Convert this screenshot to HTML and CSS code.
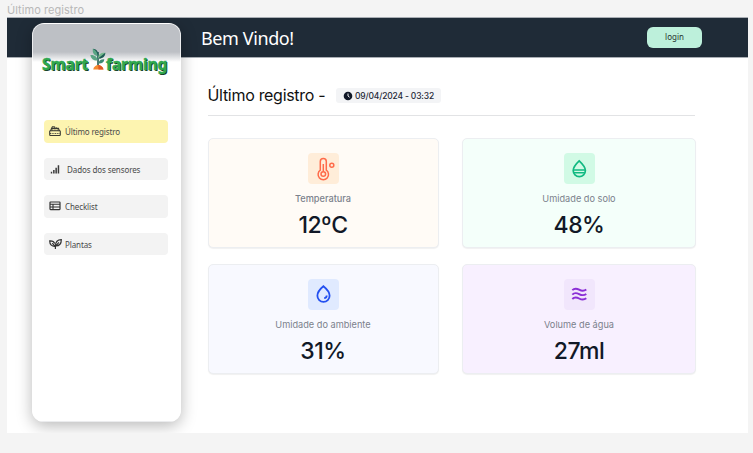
FILE: index.html
```html
<!DOCTYPE html>
<html lang="pt-BR">
<head>
<meta charset="utf-8">
<title>Smart farming</title>
<link rel="stylesheet" href="styles.css">
</head>
<body>
<div class="frame-label">Último registro</div>
<div class="frame">
  <header class="topbar">
    <h1 class="welcome">Bem Vindo!</h1>
    <button class="login">login</button>
  </header>

  <aside class="sidebar">
    <div class="logo">
      <span class="logo-word smart">Smart</span>
      <svg class="sprout" viewBox="0 0 16 22">
        <path d="M8 18V4" stroke="#1f5a55" stroke-width="1.600" fill="none"/>
        <path d="M7.500 8C3 7.500 2.500 4 2.800.8 6 1.500 8 3.500 8.200 8z" fill="#5aa584"/>
        <path d="M7.600 8C7.500 4.500 5.500 2 2.800.8 6 1 8.500 3 8.500 8z" fill="#1f5a55"/>
        <path d="M7.600 12.500C4 13 1 11 .4 7 4.500 6.500 7.500 9 7.600 12.500z" fill="#5aa584"/>
        <path d="M8 10.500C8 6.500 11 4.500 15.300 4.800 15.200 8.500 12.500 11 8 10.500z" fill="#76b98c"/>
        <path d="M8 10.500L15.300 4.800C15.200 8.500 12.500 11 8 10.500z" fill="#1f5a55"/>
        <path d="M8.300 15.500C8.800 12.500 11 11 14.300 11.200 14 14.500 11.500 16 8.300 15.500z" fill="#3c8a72"/>
        <path d="M3.200 21.500C3.700 18.500 6 17 8.200 17s4.700 1.500 5.300 4.500z" fill="#f58a32"/>
        <path d="M8.200 17c2.200 0 4.700 1.500 5.300 4.500H8.500z" fill="#dd5a25"/>
      </svg>
      <span class="logo-word farming">farming</span>
    </div>
    <nav class="menu">
      <a class="item active">
        <svg class="menu-icon" viewBox="0 0 12 12" fill="none" stroke="#3a3a32">
          <path d="M1.600 6 2.600 3.300H9.400L10.400 6" stroke-width="1.200"/>
          <path d="M3 3V1.800H5.800V3M7.500 3.200V2.500" stroke-width="1"/>
          <rect x=".7" y="5.800" width="10.600" height="4.700" rx=".7" stroke-width="1.100"/>
          <path d="M3 5H9M1 8.500H11" stroke-width=".9" stroke-dasharray="1 .7"/>
        </svg>
        <span>Último registro</span>
      </a>
      <a class="item sensors">
        <svg class="menu-icon" viewBox="0 0 12 12" fill="#3a3a3a">
          <path d="M1.800 8.800h1.400V10.500H1.800zM4.100 7h1.500V10.500H4.100zM6.400 4.800h1.500V10.500H6.400zM8.700 2.300H10.200V10.500H8.700z"/>
        </svg>
        <span>Dados dos sensores</span>
      </a>
      <a class="item">
        <svg class="menu-icon" viewBox="0 0 12 12" fill="none" stroke="#333">
          <rect x="1" y="2" width="10" height="7.600" rx=".5" stroke-width="1.200"/>
          <path d="M1 4.300H11M1 7H11M4 4V9.600" stroke-width="1.100"/>
        </svg>
        <span>Checklist</span>
      </a>
      <a class="item">
        <svg class="menu-icon leaf" viewBox="0 0 13 12" fill="none" stroke="#333" stroke-width="1.200">
          <path d="M6.400 11V8.200C6.500 4.200 8.800 1.700 12.300 1.700 12.400 5.500 10.500 8 6.800 7.900L9.900 4.300"/>
          <path d="M6.300 8.400C3 8.700.7 6.500.7 2.900 3.500 2.700 5.100 3.800 5.700 5.500M6.300 8.400 3.200 5.200"/>
        </svg>
        <span>Plantas</span>
      </a>
    </nav>
  </aside>

  <main class="content">
    <div class="heading">
      <h2 class="title">Último registro -</h2>
      <span class="stamp">
        <svg class="clock" viewBox="0 0 10 10"><circle cx="5" cy="5" r="4.300" fill="#111827"/><path d="M5 2.500V5L6.600 6.300" stroke="#f3f4f6" fill="none"/></svg>
        <span>09/04/2024 - 03:32</span>
      </span>
    </div>
    <section class="cards">
      <article class="card temperature">
        <div class="tile">
          <svg viewBox="0 0 31 31" fill="none" stroke="#ff6b4a" stroke-width="1.500">
            <path d="M12.300 17.200V8.600a3 3 0 0 1 6 0V17.200a5.200 5.200 0 1 1-6 0z"/>
            <circle cx="15.300" cy="21" r="2.300"/><path d="M15.300 18.500V11"/><circle cx="23.800" cy="12.300" r="2"/>
          </svg>
        </div>
        <p class="label">Temperatura</p><p class="value">12ºC</p>
      </article>
      <article class="card soil">
        <div class="tile">
          <svg viewBox="0 0 31 31" fill="none" stroke="#10b981" stroke-width="1.700">
            <path d="M15.200 7.800C11.800 11 9.200 14.300 9.200 17.500a6.100 6.100 0 0 0 12.200 0C21.400 14.300 18.600 11 15.200 7.800z"/>
            <path d="M9.500 17H21M10 19.700H20.700" stroke-width="1.500"/>
          </svg>
        </div>
        <p class="label">Umidade do solo</p><p class="value">48%</p>
      </article>
      <article class="card air">
        <div class="tile">
          <svg viewBox="0 0 31 31" fill="none" stroke="#2350f0" stroke-width="1.800">
            <path d="M15.400 7.200C11.900 10 9.400 13.600 9.400 16.800a6.100 6.100 0 0 0 12.200 0C21.600 13.600 18.900 10 15.400 7.200z"/>
            <path d="M18.700 16.500c0 1.600-1 2.600-2.500 2.700"/>
          </svg>
        </div>
        <p class="label">Umidade do ambiente</p><p class="value">31%</p>
      </article>
      <article class="card water">
        <div class="tile">
          <svg viewBox="0 0 31 31" fill="none" stroke="#8b2fd6" stroke-width="1.900">
            <path d="M8.300 11.200c2-2 4-2 6.800-.5s5 1.500 7.200-.2M8.300 15.600c2-2 4-2 6.800-.5s5 1.500 7.200-.2M8.300 20c2-2 4-2 6.800-.5s5 1.500 7.200-.2"/>
          </svg>
        </div>
        <p class="label">Volume de água</p><p class="value">27ml</p>
      </article>
    </section>
  </main>
</div>
</body>
</html>
```
FILE: styles.css
```css
* { box-sizing: border-box; }
body {
  margin: 0;
  height: 453px;
  overflow: hidden;
  background: #f4f4f4;
  font-family: Inter, "Liberation Sans", sans-serif;
}
h1, h2, p { margin: 0; font-weight: 400; }
.frame-label {
  height: 17px;
  padding: 3px 0 0 7px;
  font-size: 11px;
  line-height: 14px;
  letter-spacing: .05px;
  color: #b8b8b8;
}
.frame {
  position: relative;
  width: 741px;
  height: 416px;
  margin-left: 7px;
  background: #fff;
  overflow: hidden;
}
.topbar {
  display: flex;
  align-items: center;
  justify-content: space-between;
  height: 41px;
  padding: 0 46px 0 194px;
  background: #1f2b37;
  border-top: 1px solid #a9aeb4;
  border-bottom: 1px solid #a9aeb4;
}
.welcome {
  font: 400 18px/26px "Noto Sans", sans-serif;
  letter-spacing: -.4px;
  color: #fff;
}
.login {
  width: 55px;
  height: 21px;
  padding: 0 0 2px;
  border: 0;
  border-radius: 6px;
  background: #bdf0db;
  font: 400 8px/18px "Noto Sans", sans-serif;
  color: #26332e;
}
.sidebar {
  position: absolute;
  left: 25px;
  top: 6px;
  width: 149px;
  height: 399px;
  padding: 23px 11px 0;
  border: 1px solid rgba(255, 255, 255, .7);
  border-radius: 12px;
  background: linear-gradient(#bdc0c5 0, #bdc0c5 28px, #fff 38px);
  box-shadow: 0 4px 16px rgba(0, 0, 0, .28);
}
.logo {
  display: flex;
  align-items: flex-start;
  height: 32px;
  margin-left: -2px;
}
.logo-word {
  flex: none;
  margin-top: 6px;
  font: 700 15.5px/22px "Noto Sans", sans-serif;
  letter-spacing: -.1px;
  color: #2fa84f;
  -webkit-text-stroke: .5px #2fa84f;
  text-shadow: 1px 1px 0 #12351f;
}
.smart { width: 48px; }
.sprout { flex: none; width: 16px; height: 22px; margin-top: 1px; }
.menu {
  display: grid;
  gap: 15px;
  margin-top: 41px;
}
.item {
  display: flex;
  align-items: center;
  gap: 4px;
  height: 22.5px;
  width: 124px;
  padding-left: 5px;
  border-radius: 4px;
  background: #f3f3f3;
  font: 400 8px/12px "Noto Sans", sans-serif;
  letter-spacing: -.1px;
  color: #4a4a4a;
}
.item span { padding-top: 2px; }
.active { background: #fdf4b0; }
.sensors { gap: 6px; }
.menu-icon { width: 12px; height: 12px; }
.leaf { width: 13px; margin: 0 -1px 0 0; }
.content { padding: 25px 52px 0 200.500px; }
.heading {
  display: flex;
  align-items: center;
  height: 33px;
  width: 487px;
  padding-bottom: 8px;
  border-bottom: 1px solid #e2e3e5;
}
.title {
  width: 128.500px;
  font-size: 16px;
  line-height: 24px;
  letter-spacing: -.3px;
  color: #111;
  white-space: nowrap;
}
.stamp {
  display: flex;
  align-items: center;
  gap: 2px;
  width: 105px;
  height: 15px;
  margin-top: 1px;
  padding-left: 7px;
  border-radius: 3px;
  background: #f3f4f6;
  font-size: 8.500px;
  font-weight: 500;
  letter-spacing: -.17px;
  color: #1f2937;
  white-space: nowrap;
}
.clock { width: 10px; height: 10px; }
.cards {
  display: grid;
  grid-template-columns: 231px 234px;
  grid-auto-rows: 110px;
  gap: 16px 23.500px;
  margin-top: 21.500px;
}
.card {
  display: flex;
  flex-direction: column;
  align-items: center;
  padding-top: 14px;
  border: 1px solid #eceef1;
  border-radius: 5px;
  box-shadow: 0 1px 1px rgba(0, 0, 0, .06);
}
.tile { width: 31px; height: 31px; border-radius: 4px; }
.tile svg { display: block; width: 31px; height: 31px; }
.label {
  margin-top: 9.500px;
  font-size: 9.200px;
  line-height: 12px;
  color: #7b818c;
}
.value {
  margin-top: 6px;
  font-size: 23px;
  font-weight: 500;
  line-height: 28px;
  letter-spacing: -.5px;
  color: #111827;
}
.temperature { background: #fffbf6; }
.temperature .tile { background: #ffedd9; }
.temperature .label { font-weight: 500; }
.soil { background: #f4fffa; }
.soil .tile { background: #d1fae5; }
.air { background: #f8f9ff; }
.air .tile { background: #e0eaff; }
.water { background: #f8f0ff; }
.water .tile { background: #f1e6fc; }
```
